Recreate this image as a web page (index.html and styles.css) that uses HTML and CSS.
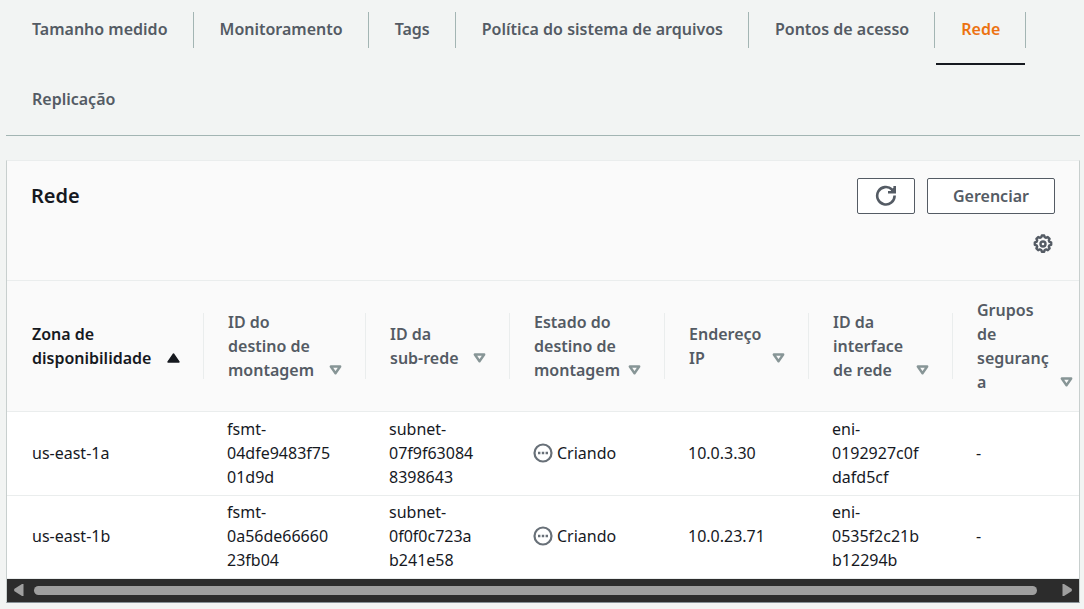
FILE: index.html
```html
<!DOCTYPE html>
<html lang="pt-BR">
<head>
<meta charset="utf-8">
<title>Rede</title>
<link rel="stylesheet" href="styles.css">
</head>
<body>
<svg class="defs" aria-hidden="true">
  <symbol id="sort" viewBox="0 0 13 10"><path d="M1.800 1.500h9.400L6.500 8.300z" fill="none" stroke="currentColor" stroke-width="2.400" stroke-linejoin="round"/></symbol>
  <symbol id="sorted" viewBox="0 0 13 10"><path d="M6.500 1 12 9H1z" fill="currentColor" stroke="currentColor" stroke-width="1.400" stroke-linejoin="round"/></symbol>
  <symbol id="pending" viewBox="0 0 20 20"><circle cx="10" cy="10" r="8.500" fill="none" stroke="currentColor" stroke-width="2.200"/><path d="M5 8.800h2.400v2.400H5zM8.800 8.800h2.400v2.400H8.800zM12.600 8.800H15v2.400h-2.400z" fill="currentColor"/></symbol>
</svg>
<nav class="tabs" aria-label="Detalhes">
  <a class="tab" href="#tamanho">Tamanho medido</a>
  <a class="tab" href="#monitoramento">Monitoramento</a>
  <a class="tab" href="#tags">Tags</a>
  <a class="tab" href="#politica">Política do sistema de arquivos</a>
  <a class="tab" href="#pontos">Pontos de acesso</a>
  <a class="tab tab-active" href="#rede" aria-current="page">Rede</a>
  <a class="tab tab-last" href="#replicacao">Replicação</a>
</nav>
<main class="panel" id="rede">
  <header class="panel-header">
    <h2 class="title">Rede</h2>
    <div class="tools">
      <div class="actions">
        <button class="btn btn-icon" type="button" aria-label="Atualizar">
          <svg width="22" height="22" viewBox="0 0 22 22" fill="none" stroke="currentColor" stroke-width="2.600"><path d="M19.600 10.500a8.700 8.700 0 1 1-2.600-6l2 2"/><path d="M19.700 1v6.200h-6.700"/><path d="M15.500 6.500 19 3v3.500z" fill="currentColor" stroke-width="1"/></svg>
        </button>
        <button class="btn" type="button">Gerenciar</button>
      </div>
      <button class="settings" type="button" aria-label="Preferências">
        <svg width="20" height="20" viewBox="0 0 20 20" fill="none" stroke="currentColor" stroke-width="2.400" stroke-linejoin="round"><path d="M8.300 3.200 8.800 1.500h2.400l.5 1.700 1.500.6 1.600-.8 1.800 1.800-.8 1.600.6 1.500 1.800.5v2.400l-1.800.5-.6 1.500.8 1.600-1.800 1.800-1.600-.8-1.500.6-.5 1.700H8.800l-.5-1.700-1.500-.6-1.600.8-1.800-1.800.8-1.600-.6-1.500-1.800-.5V8.400l1.800-.5.6-1.500-.8-1.600L5.200 3l1.600.8z"/><circle cx="10" cy="10" r="2.500"/></svg>
      </button>
    </div>
  </header>
  <div class="table-wrap">
    <table class="table">
      <colgroup><col class="c-zone"><col class="c-mount"><col class="c-std"><col class="c-state"><col class="c-std"><col class="c-std"><col class="c-std"></colgroup>
      <thead>
        <tr>
          <th aria-sort="ascending"><button class="sort sort-on" type="button"><span>Zona de<br>disponibilidade</span><svg class="arrow"><use href="#sorted"/></svg></button></th>
          <th><button class="sort" type="button"><span>ID do<br>destino de<br>montagem</span><svg class="arrow"><use href="#sort"/></svg></button></th>
          <th><button class="sort" type="button"><span>ID da<br>sub-rede</span><svg class="arrow"><use href="#sort"/></svg></button></th>
          <th><button class="sort" type="button"><span>Estado do<br>destino de<br>montagem</span><svg class="arrow"><use href="#sort"/></svg></button></th>
          <th><button class="sort" type="button"><span>Endereço<br>IP</span><svg class="arrow"><use href="#sort"/></svg></button></th>
          <th><button class="sort" type="button"><span>ID da<br>interface<br>de rede</span><svg class="arrow"><use href="#sort"/></svg></button></th>
          <th><button class="sort" type="button"><span>Grupos<br>de<br>seguranç<br>a</span><svg class="arrow"><use href="#sort"/></svg></button></th>
        </tr>
      </thead>
      <tbody>
        <tr>
          <td>us-east-1a</td>
          <td>fsmt-<br>04dfe9483f75<br>01d9d</td>
          <td>subnet-<br>07f9f63084<br>8398643</td>
          <td><span class="status"><svg class="status-icon"><use href="#pending"/></svg>Criando</span></td>
          <td>10.0.3.30</td>
          <td>eni-<br>0192927c0f<br>dafd5cf</td>
          <td>-</td>
        </tr>
        <tr>
          <td>us-east-1b</td>
          <td>fsmt-<br>0a56de66660<br>23fb04</td>
          <td>subnet-<br>0f0f0c723a<br>b241e58</td>
          <td><span class="status"><svg class="status-icon"><use href="#pending"/></svg>Criando</span></td>
          <td>10.0.23.71</td>
          <td>eni-<br>0535f2c21b<br>b12294b</td>
          <td>-</td>
        </tr>
      </tbody>
    </table>
  </div>
  <div class="scrollbar" aria-hidden="true">
    <svg width="12" height="14" viewBox="0 0 12 14"><path d="M10.500 1v12H9L1.500 8.200q-1-1.200 0-2.400L9 1z" fill="currentColor"/></svg>
    <div class="track"><div class="thumb"></div></div>
    <svg width="12" height="14" viewBox="0 0 12 14"><path d="M1.500 1v12H3l7.500-4.800q1-1.200 0-2.400L3 1z" fill="currentColor"/></svg>
  </div>
</main>
</body>
</html>
```

FILE: styles.css
```css
* { box-sizing: border-box; }

body {
  margin: 0;
  padding: 0 4px 6px 6px;
  background: #f2f4f3;
  color: #16191f;
  font: 16px/24px "Noto Sans", "Open Sans", sans-serif;
}

button {
  margin: 0;
  padding: 0;
  border: 0;
  background: none;
  color: inherit;
  font: inherit;
  text-align: left;
}

.defs { display: none; }

.tabs {
  display: flex;
  flex-wrap: wrap;
  row-gap: 17px;
  padding: 12px 0 13px;
  border-bottom: 1px solid #a3b5b3;
}

.tab {
  position: relative;
  height: 53px;
  padding: 5px 26px 0;
  color: #545b64;
  font-weight: 600;
  text-decoration: none;
}

.tab::after {
  content: "";
  position: absolute;
  top: 0;
  right: 0;
  height: 36px;
  border-right: 1px solid #a3b5b3;
}

.tab-last { height: 40px; }
.tab-last::after { display: none; }

.tab-active { color: #ec7211; }

.tab-active::before {
  content: "";
  position: absolute;
  right: 1px;
  bottom: 0;
  left: 1px;
  height: 2px;
  background: #16191f;
}

.panel {
  margin-top: 24px;
  border: 1px solid #c8cfce;
  border-top-color: #eaeded;
  border-bottom-color: #879196;
  background: #fff;
}

.panel-header {
  display: flex;
  justify-content: space-between;
  padding: 17px 24px 26px;
  border-bottom: 1px solid #eaeded;
  background: #fafafa;
}

.title {
  margin: 0;
  padding-top: 2px;
  font-size: 20px;
  line-height: 32px;
  font-weight: 600;
}

.tools {
  display: flex;
  flex-direction: column;
  align-items: flex-end;
  gap: 20px;
}

.actions {
  display: flex;
  gap: 12px;
}

.btn {
  display: flex;
  align-items: center;
  justify-content: center;
  height: 36px;
  padding: 0 25px;
  border: 1px solid #545b64;
  border-radius: 2px;
  background: #fff;
  color: #545b64;
  font-weight: 600;
}

.btn-icon { padding: 0 17px; }

.settings {
  display: flex;
  margin-right: 2px;
  color: #545b64;
}

.table-wrap { overflow: hidden; }

.table {
  width: 100%;
  min-width: 1090px;
  border-collapse: collapse;
  table-layout: fixed;
}

.c-zone { width: 197px; }
.c-mount { width: 162px; }
.c-std { width: 144px; }
.c-state { width: 155px; }

th {
  position: relative;
  height: 130px;
  padding: 0 24px;
  border-bottom: 1px solid #eaeded;
  background: #fafafa;
  color: #545b64;
}

th:not(:last-child)::after {
  content: "";
  position: absolute;
  top: 32px;
  right: 0;
  bottom: 32px;
  border-right: 1px solid #eaeded;
}

.sort {
  display: flex;
  align-items: flex-end;
  justify-content: space-between;
  width: 100%;
  font-weight: 600;
}

.sort-on { color: #16191f; }

.arrow {
  flex: none;
  width: 13px;
  height: 10px;
  margin-bottom: 7px;
  color: #879596;
}

.sort-on .arrow { color: #16191f; }

td {
  padding: 5px 23px 6px;
  border-bottom: 1px solid #eaeded;
}

tr:last-child td { padding-top: 4px; }

th:first-child,
td:first-child { padding-left: 25px; }

.status {
  display: flex;
  align-items: center;
  gap: 4px;
}

.status-icon {
  width: 20px;
  height: 20px;
  color: #687078;
}

.scrollbar {
  display: flex;
  align-items: center;
  gap: 9px;
  height: 23px;
  padding: 0 6px;
  background: #2c2c2c;
  color: #9f9f9f;
}

.track { flex: 1; }

.thumb {
  height: 9px;
  margin-right: 15px;
  border-radius: 5px;
  background: #9f9f9f;
}
```
